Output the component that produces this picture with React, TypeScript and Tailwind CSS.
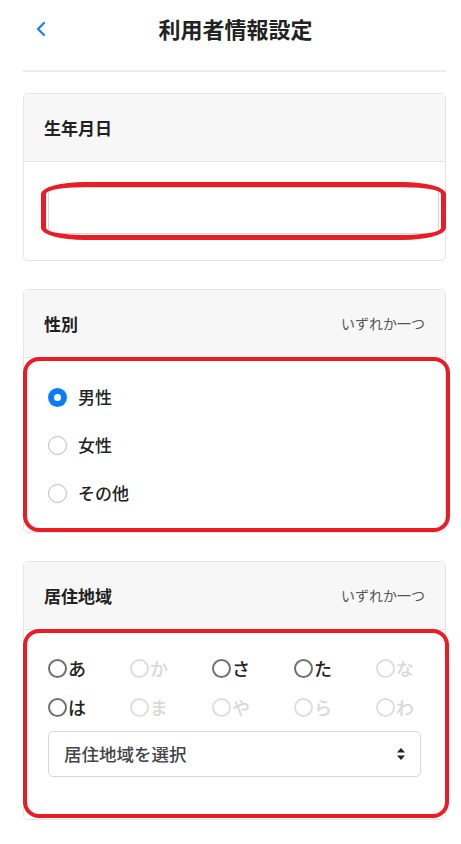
import { ChevronLeft } from 'lucide-react';

const font = { fontFamily: '"Noto Sans CJK JP", "Noto Sans", sans-serif' };

function CardHeader({ title, hint }: { title: string; hint?: string }) {
  return (
    <div className="h-[68px] flex items-center justify-between pl-5 pr-[20px] bg-[#f7f7f7] border-b border-[#e4e4e4]">
      <div className="text-[17px] font-bold text-[#222]">{title}</div>
      {hint && <div className="text-[14px] text-[#555]">{hint}</div>}
    </div>
  );
}

function Radio({ label, checked }: { label: string; checked?: boolean }) {
  return (
    <div className="h-[48px] flex items-center gap-[11px]">
      {checked ? (
        <div className="w-[19px] h-[19px] rounded-full bg-[#0a7cff] grid place-items-center">
          <div className="w-[7px] h-[7px] rounded-full bg-white" />
        </div>
      ) : (
        <div className="w-[19px] h-[19px] rounded-full border border-[#b8bcc4] bg-white" />
      )}
      <span className="text-[17px] font-medium text-[#222]">{label}</span>
    </div>
  );
}

const kana = [
  { k: 'あ', on: true },
  { k: 'か', on: false },
  { k: 'さ', on: true },
  { k: 'た', on: true },
  { k: 'な', on: false },
  { k: 'は', on: true },
  { k: 'ま', on: false },
  { k: 'や', on: false },
  { k: 'ら', on: false },
  { k: 'わ', on: false },
];

export default function App() {
  return (
    <div className="bg-white min-h-[844px] pl-[23px] pr-[15px]" style={font}>
      <div className="h-[72px] flex items-center relative border-b-2 border-[#ececec]">
        <ChevronLeft className="w-[24px] h-[24px] text-[#1a7cf5] absolute left-[6px] top-[17px]" strokeWidth={2.2} />
        <div className="flex-1 text-center text-[22px] font-bold text-[#222] pb-[14px] pl-[2px]">利用者情報設定</div>
      </div>

      <div className="mt-[21px] border border-[#e4e4e4] rounded-[5px] relative">
        <CardHeader title="生年月日" />
        <div className="h-[98px] pt-[25px] pl-[24px] pr-[6px]">
          <div className="h-[47px] border border-[#d4d8de] bg-white" />
        </div>
        <div className="absolute left-[17px] -right-[1px] top-[88px] h-[58px] rounded-[44px/12px] border-[5px] border-[#ea1c24]" />
      </div>

      <div className="mt-[28px] border border-[#e4e4e4] rounded-[5px] relative">
        <CardHeader title="性別" hint="いずれか一つ" />
        <div className="pt-[15px] pb-[15px] pl-[24px]">
          <Radio label="男性" checked />
          <Radio label="女性" />
          <Radio label="その他" />
        </div>
        <div className="absolute -left-[1px] -right-[5px] top-[67px] h-[175px] rounded-[16px] border-[4px] border-[#ea1c24]" />
      </div>

      <div className="mt-[28px] border border-[#e4e4e4] rounded-[5px] relative">
        <CardHeader title="居住地域" hint="いずれか一つ" />
        <div className="pt-[28px] pb-[42px] pl-[24px] pr-[24px]">
          <div className="grid grid-cols-5 w-[410px] gap-y-[19px]">
            {kana.map((x) => (
              <div key={x.k} className="flex items-center h-[20px]">
                <div className={`w-[19px] h-[19px] rounded-full border-2 ${x.on ? 'border-[#707070]' : 'border-[#dedede]'}`} />
                <span className={`text-[18px] font-medium ml-[1px] ${x.on ? 'text-[#222]' : 'text-[#d8d8d8]'}`}>{x.k}</span>
              </div>
            ))}
          </div>
          <div className="mt-[14px] h-[46px] border border-[#d4d8de] rounded-[5px] flex items-center justify-between pl-[15px] pr-[14px]">
            <span className="text-[17.5px] font-medium text-[#444]">居住地域を選択</span>
            <svg width="10" height="14" viewBox="0 0 10 14">
              <path d="M5 1 L9 5.5 H1 Z" fill="#222" />
              <path d="M5 13 L9 8.5 H1 Z" fill="#222" />
            </svg>
          </div>
        </div>
        <div className="absolute -left-[1px] -right-[4px] top-[67px] h-[189px] rounded-[16px] border-[4px] border-[#ea1c24]" />
      </div>
    </div>
  );
}
